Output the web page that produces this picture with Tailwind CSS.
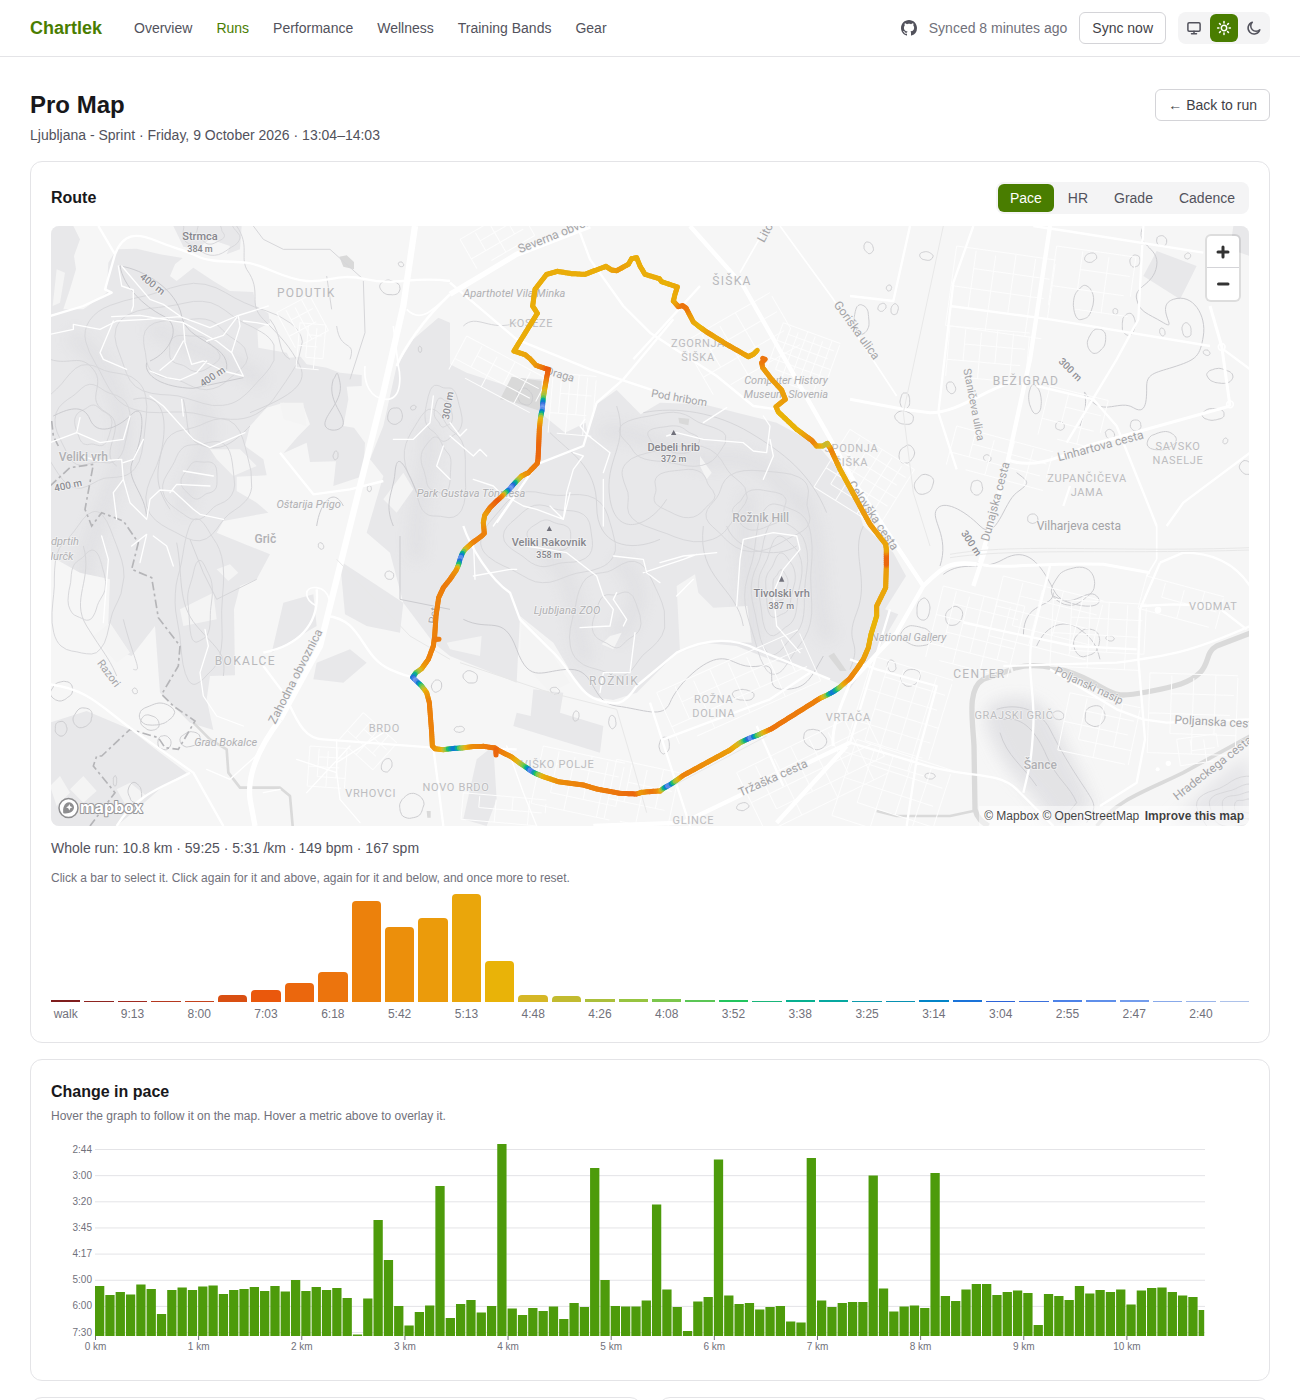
<!DOCTYPE html>
<html lang="en">
<head>
    <meta charset="UTF-8">
    <meta name="viewport" content="width=device-width, initial-scale=1.0">
    <title>Pro Map - Chartlek</title>
    <script src="https://cdn.jsdelivr.net/npm/@tailwindcss/browser@4"></script>
</head>
<body class="bg-white text-zinc-900 font-['Liberation_Sans',Arial,sans-serif]">

    <!-- Top bar -->
    <header class="border-b border-zinc-200">
        <div class="flex h-14 items-center justify-between px-[30px]">
            <div class="flex items-center gap-8">
                <a href="#" class="text-lg font-bold text-lime-700">Chartlek</a>
                <nav class="flex gap-6 text-sm text-zinc-600">
                    <a href="#">Overview</a>
                    <a href="#" class="text-lime-700">Runs</a>
                    <a href="#">Performance</a>
                    <a href="#">Wellness</a>
                    <a href="#">Training Bands</a>
                    <a href="#">Gear</a>
                </nav>
            </div>
            <div class="flex items-center gap-3 text-sm">
                <a href="#" aria-label="GitHub" class="text-zinc-600">
                    <svg class="size-4" viewBox="0 0 16 16" fill="currentColor"><path d="M8 0C3.58 0 0 3.58 0 8c0 3.54 2.29 6.53 5.47 7.59.4.07.55-.17.55-.38 0-.19-.01-.82-.01-1.49-2.01.37-2.53-.49-2.69-.94-.09-.23-.48-.94-.82-1.13-.28-.15-.68-.52-.01-.53.63-.01 1.08.58 1.23.82.72 1.21 1.87.87 2.33.66.07-.52.28-.87.51-1.07-1.78-.2-3.64-.89-3.64-3.95 0-.87.31-1.59.82-2.15-.08-.2-.36-1.02.08-2.12 0 0 .67-.21 2.2.82.64-.18 1.32-.27 2-.27s1.36.09 2 .27c1.53-1.04 2.2-.82 2.2-.82.44 1.1.16 1.92.08 2.12.51.56.82 1.27.82 2.15 0 3.07-1.87 3.75-3.65 3.95.29.25.54.73.54 1.48 0 1.07-.01 1.93-.01 2.2 0 .21.15.46.55.38A8.01 8.01 0 0 0 16 8c0-4.42-3.58-8-8-8z"/></svg>
                </a>
                <span class="text-zinc-500">Synced 8 minutes ago</span>
                <button type="button" class="h-8 rounded-md border border-zinc-300 px-3 text-zinc-700">Sync now</button>
                <div class="flex gap-0.5 rounded-lg bg-zinc-100 p-0.5 text-zinc-600">
                    <button type="button" aria-label="System theme" class="flex size-7 items-center justify-center rounded-md">
                        <svg class="size-4" viewBox="0 0 16 16" fill="none" stroke="currentColor" stroke-width="1.5" stroke-linecap="round" stroke-linejoin="round"><rect x="1.9" y="2.7" width="12.2" height="8.6" rx="1.2"/><path d="M8 11.3v2.4M5.5 13.7h5"/></svg>
                    </button>
                    <button type="button" aria-label="Light theme" class="flex size-7 items-center justify-center rounded-md bg-lime-700 text-white">
                        <svg class="size-4" viewBox="0 0 16 16" fill="none" stroke="currentColor" stroke-width="1.5" stroke-linecap="round"><circle cx="8" cy="8" r="2.7"/><path d="M8 1.6v1.3M8 13.1v1.3M1.6 8h1.3M13.1 8h1.3M3.5 3.5l.9.9M11.6 11.6l.9.9M3.5 12.5l.9-.9M11.6 4.4l.9-.9"/></svg>
                    </button>
                    <button type="button" aria-label="Dark theme" class="flex size-7 items-center justify-center rounded-md">
                        <svg class="size-4" viewBox="0 0 16 16" fill="none" stroke="currentColor" stroke-width="1.5" stroke-linecap="round" stroke-linejoin="round"><path d="M13.800 9.700A6 6 0 1 1 6.300 2.200a5.200 5.200 0 0 0 7.500 7.500z"/></svg>
                    </button>
                </div>
            </div>
        </div>
    </header>

    <main class="flex flex-col gap-4 px-[30px] py-8">
        <div class="flex items-start justify-between">
            <div>
                <h1 class="text-2xl font-bold">Pro Map</h1>
                <p class="mt-1 text-sm text-zinc-600">Ljubljana - Sprint · Friday, 9 October 2026 · 13:04–14:03</p>
            </div>
            <a href="#" class="flex h-8 items-center rounded-md border border-zinc-300 px-3 text-sm text-zinc-700">← Back to run</a>
        </div>

        <!-- Route card -->
        <section class="rounded-xl border border-zinc-200 p-5">
            <div class="mb-3 flex items-center justify-between">
                <h2 class="text-base font-bold">Route</h2>
                <div class="flex gap-0.5 rounded-lg bg-zinc-100 p-0.5 text-sm text-zinc-600">
                    <button type="button" class="h-7 rounded-md bg-lime-700 px-3 text-white">Pace</button>
                    <button type="button" class="h-7 rounded-md px-3">HR</button>
                    <button type="button" class="h-7 rounded-md px-3">Grade</button>
                    <button type="button" class="h-7 rounded-md px-3">Cadence</button>
                </div>
            </div>

            <div class="relative h-[600px] overflow-hidden rounded-lg bg-[#f6f6f6]">
                <svg class="size-full" viewBox="3 0 3594 1800" preserveAspectRatio="xMidYMid slice" role="img" aria-label="Map of the run">
                    <defs>
                        <filter id="soft"><feGaussianBlur stdDeviation="22"/></filter>
                        <clipPath id="woods-clip"><use href="#woods"/></clipPath>
                    </defs>

                    <!-- Woodland -->
                    <path id="woods" fill="#e8e8ea" d="M0 0H70L90 40 72 90 78 130 60 190 40 250 100 250 170 200 175 110 200 70 260 68 330 85 398 96 375 115 360 150 380 165 430 125 490 165 540 195 610 198 618 240 655 262 660 290 622 310 625 365 710 380 718 395 752 392 770 415 830 425 870 440 935 447 935 480 890 482 895 520 880 600 912 605 945 650 940 750 850 780 858 706 780 708 770 650 700 682 745 630 780 595 762 545 700 530 650 545 600 600 585 660 640 700 650 748 560 752 560 795 620 830 655 860 520 885 500 920 660 985 620 1060 570 1080 552 1150 555 1348 480 1350 470 1420 490 1512 420 1490 330 1400 315 1200 245 1290 172 1262 180 1060 90 1040 0 990ZM370 0H575L570 70 530 85 540 60 480 40 440 70 400 62ZM1165 275 1200 290V415L1250 440 1380 482 1400 455 1475 460 1480 568 1545 620 1607 590 1612 620 1640 535 1700 492 1772 565 1830 530 1960 535 2180 590 2300 655 2400 770 2440 900 2530 980 2568 1050 2505 1150 2545 1165 2490 1260 2430 1345 2400 1388 2280 1335 2160 1300 2060 1260 1960 1250 1885 1275 1840 1320 1760 1400 1690 1422 1620 1412 1570 1350 1510 1250 1410 1170 1400 1370 1300 1330 1200 1290 1150 1250 1060 1130 1020 980 950 920 1000 750 960 700 1000 600 1040 420 1090 340ZM870 1005 1060 1130 1050 1220 950 1200 885 1165ZM700 1130 790 1105 800 1200 665 1280ZM800 1310 900 1270 950 1310 880 1370 790 1360ZM0 1490 110 1455 240 1510 330 1580 410 1640 340 1680 260 1750 200 1800H0ZM1450 1390 1540 1400 1530 1460 1660 1500 1650 1580 1390 1500 1400 1460 1442 1470ZM1280 1600 1330 1560 1340 1720 1310 1800 1240 1780ZM3280 150 3320 75 3440 120 3390 220ZM3550 0H3600V90L3540 70Z"/>
                    <g clip-path="url(#woods-clip)" fill="none" stroke="#d4d4d8" filter="url(#soft)" opacity=".4">
                        <path stroke-width="40" d="M60 330C180 400 240 560 210 700S80 980 110 1100M300 300C420 380 520 380 640 470M440 520C520 640 420 700 400 860M1130 600C1160 700 1090 800 1100 1000M1650 620C1800 600 1880 720 2000 700S2200 760 2260 860M2100 800C2060 950 2120 1100 2100 1260M2250 800C2330 950 2280 1150 2340 1240M1480 980C1600 1040 1560 1200 1610 1310M1700 1000C1800 1080 1760 1160 1700 1240"/>
                    </g>

                    <!-- Castle hill -->
                    <path fill="#e1e1e4" filter="url(#soft)" opacity=".9" d="M2830 1430C2900 1400 2980 1410 3020 1500S3090 1630 3130 1740L3040 1800H3000C2980 1720 2900 1680 2850 1590S2790 1450 2830 1430Z"/>
                    <path fill="none" stroke="#cfcfd3" stroke-width="3" d="M2840 1450C2900 1430 2970 1450 3000 1510S3060 1620 3100 1680 3140 1740 3110 1790M2860 1480C2920 1470 2960 1520 2990 1590S3060 1680 3080 1730L3030 1790M2850 1520C2870 1590 2920 1620 2960 1680"/>
                    <path fill="#e6e6e9" filter="url(#soft)" d="M3360 1800C3440 1720 3500 1640 3600 1590V1800Z"/>

                    <!-- Clearings -->
                    <g fill="#f4f4f4">
                        <path d="M1880 1080 1935 1045 1945 1100 1990 1145 2092 1140 2105 1250 2000 1245 1890 1280ZM390 1150 490 1100 500 1180 400 1200ZM500 1030 540 1015 565 1040 535 1065ZM1190 1250 1295 1230 1290 1290 1200 1270ZM1680 1230 1715 1220 1690 1270 1655 1255ZM1950 690 1985 740 1970 760 1950 720ZM1415 1180 1410 1300 1500 1400 1560 1370 1480 1240ZM480 670 570 670 620 720 550 750 500 700ZM690 530 760 530 770 600 700 580ZM1060 740 1090 790 1040 860 1000 820Z"/>
                        <path d="M60 1690 100 1650 140 1695 100 1730ZM0 1680 30 1650 60 1700 20 1740ZM200 1690 240 1670 290 1710 240 1760ZM130 1230 180 1190 240 1280 200 1310ZM20 130 45 140 30 230 8 240Z"/>
                    </g>
                    <path fill="#d9d9d9" d="M868 92 890 88 912 108 912 130 880 122ZM1350 520 1385 452 1475 465 1470 555 1380 525ZM1885 575 1918 578 1915 598 1888 592ZM2335 1290 2352 1280 2390 1335 2370 1335ZM1130 1755H1142V1775H1132Z"/>

                    <!-- River -->
                    <g fill="none" stroke="#dadada" stroke-width="16" stroke-linejoin="round">
                        <path d="M2888 1328C2960 1305 3060 1330 3130 1370S3200 1415 3290 1398 3420 1370 3450 1340 3465 1280 3500 1260L3600 1222M2882 1332 2800 1360C2750 1390 2768 1480 2772 1560L2775 1750C2782 1780 2800 1790 2815 1800"/>
                        <path stroke-width="11" d="M3140 1800C3200 1720 3300 1690 3400 1640L3600 1530"/>
                        <path stroke-width="8" d="M430 1490 480 1540 530 1570 535 1640 570 1685 690 1685 720 1710 728 1800M2480 1755 2540 1770 2700 1770 2770 1755"/>
                    </g>

                    <g id="contours" fill="none" stroke="#d8d8db" stroke-width="3"></g>
                    <g fill="none" stroke="#d6d6d9" stroke-width="3">
                        <path d="M0 400C60 420 90 380 130 430S100 520 170 560 140 680 200 720M250 520C330 500 350 560 340 640S300 760 360 850M400 520C420 600 400 640 460 660S560 640 600 600M590 130C640 200 590 230 640 280S720 360 750 420 700 520 600 560M560 0C600 60 570 90 590 130M610 0 640 40 700 70 840 70 940 160M660 280C700 330 680 380 720 400M830 150 845 250M940 165 945 320 900 460M860 300C870 380 920 340 900 400M380 950C400 1050 380 1130 440 1200S530 1280 520 1350M620 1060 500 1120 460 1040 420 940M100 960C130 1060 60 1120 110 1200S180 1300 200 1350M220 1180C250 1300 280 1340 250 1330M1240 300C1280 260 1320 320 1400 290M1780 560C1880 540 2000 560 2100 620S2280 740 2330 860M1700 540C1740 660 1660 700 1680 820S1800 900 1850 820M1500 620C1560 680 1640 720 1640 840S1740 980 1830 940M2030 900C2060 980 2180 1000 2240 960M1960 900C1940 1060 2060 1080 2080 1200M2440 900C2400 980 2460 1060 2420 1160S2440 1240 2400 1330"/>
                    </g>
                    <g fill="none" stroke="#cbcbcf" stroke-width="3">
                        <path d="M300 405C360 380 400 300 340 270S220 180 210 120C280 130 380 190 395 270S540 350 530 430M290 410C280 450 340 485 430 487L580 455M10 570C50 550 100 530 120 580S200 610 245 565 280 640 250 700 290 800 290 880M850 460C830 520 880 560 880 590S820 620 825 590 880 520 870 470 860 450 850 460M1100 800C1060 700 1040 680 1035 740S1000 830 1030 900M800 900C810 830 850 780 880 840M1050 930V1120L1200 1150M1320 1100"/>
                        <path d="M1240 1180C1320 1220 1360 1160 1400 1270S1480 1330 1560 1330 1620 1430 1700 1440 1840 1480 1860 1430 1950 1310 2000 1300 2060 1330 2130 1320 2130 1390 2200 1390 2280 1360 2320 1290 2390 1290M0 1310 130 1400C200 1420 250 1420 330 1500S500 1540 560 1620 700 1690 820 1700M1200 1455C1300 1480 1280 1560 1360 1520S1410 1590 1460 1590"/>
                        <path d="M2670 1020C2700 930 2640 880 2660 850S2740 850 2790 900 2860 830 2900 800 2940 770 2900 740M2680 1045C2740 1000 2790 1040 2860 1000S2970 1010 3010 1090 3110 1080 3140 1110 3110 1160 3010 1110M2920 1230C2920 1120 3010 1150 3010 1100M2960 1260C2990 1190 3050 1180 3090 1210S3140 1260 3150 1300M3280 0C3250 60 3330 60 3320 120S3250 180 3260 220 3290 260 3340 290 3310 240 3370 220 3470 270 3460 330 3440 400 3380 420 3290 440 3290 480 3290 570 3250 545 3160 570 3120 520 3130 510 3090 600 3100 630M3010 370C3060 420 3150 400 3200 440S3150 460 3090 450M2765 500C2740 420 2800 390 2830 410S2880 370 2920 400 2870 520 2765 500M2880 730C2920 710 2950 780 2940 810S2880 850 2870 820M3090 780C3100 850 3050 900 3140 900S3170 820 3210 780 3210 720 3160 720 3080 680 3030 720M2840 1370C2860 1400 2950 1400 3000 1480S3060 1520 3070 1560 3110 1600 3150 1640 3210 1620 3200 1680M2900 1240C2830 1200 2850 1290 2860 1300M2670 1470C2690 1380 2730 1380 2710 1340S2730 1300 2740 1280M2670 1470C2760 1480 2720 1540 2740 1560S2730 1650 2710 1650 2690 1560 2630 1610M3310 180C3340 210 3350 160 3370 140S3400 200 3460 180 3490 240 3530 180"/>
                    </g>
                    <g id="blobs" fill="none" stroke="#cdcdd0" stroke-width="3"></g>

                    <!-- Municipal border -->
                    <path fill="none" stroke="#b5b5b8" stroke-width="5" stroke-dasharray="26 10 8 10" d="M0 780 60 725 130 715 105 850 125 900 155 860 220 885 265 950 245 1030 305 1055 325 1175 390 1260 385 1320 335 1405 370 1440 435 1485 385 1570 345 1565 325 1535 240 1510 155 1590 140 1590 130 1620 195 1700 120 1800M5 585 10 630 25 660"/>

                    <!-- Minor streets and tracks -->
                    <g id="streets" fill="none" stroke="#fdfdfd" stroke-width="3"></g>
                    <g fill="none" stroke="#fff" stroke-width="4" stroke-linejoin="round" stroke-linecap="round">
                        <path d="M0 325 70 310 70 295 150 310 200 285 290 280 390 272 440 290 480 305 560 270 640 245 655 240M185 272 270 268 400 290 405 350 425 415 460 405 520 435 580 450 545 380 570 300 565 270M300 435 350 455 390 462 440 440 470 405M400 345 370 400 330 433M205 120 215 180 250 192 250 240 245 255M215 120 300 220 340 235 390 270M470 345 520 328 560 275M580 285 620 290 655 297M545 380 500 345 400 290"/>
                        <path d="M0 650 80 620 90 575M80 620 150 650 220 640 240 570M90 690 150 705 215 700 220 760 190 800 200 880M220 710 250 700 280 640M220 760 240 830 290 880 300 820 330 792 370 795 430 850 450 865 520 880M360 800 380 775 480 780M400 735 490 750M160 1190 175 1000 155 930M245 960 290 925 270 1010M310 930 350 960 370 1020M465 1210 475 1260 450 1340 460 1410 500 1470 580 1500M300 510 340 540 430 640 480 665 585 620M190 285 150 380 160 400 230 430M395 520 400 570"/>
                        <path d="M1200 590 1230 630 1250 610M1200 630 1270 690 1290 670 1310 690M1330 900 1400 800 1430 760M1270 760 1330 780 1350 800 1420 840 1460 850 1540 880 1560 800M1540 880 1550 800 1570 730 1600 690 1570 680M1660 740 1680 680 1610 625 1590 600 1605 580M1660 760 1660 900M1850 630 1880 620 1960 640 2080 650 2110 675 2150 680 2160 600 2140 570M1960 590 2030 545M2140 760 2170 690 2160 640M1690 990 1780 1000 1790 1040 1830 1070M1830 1010 1900 990 2000 980M1720 1200 1730 1180 1690 1120 1700 1100M2060 1140 2070 1000 2080 940 2170 920 2240 930 2250 970 2200 1030 2170 1100 2180 1200 2250 1280M1430 960 1550 980 1640 1050 1660 1110 1690 1150 1680 1200 1590 1205M1500 840 1540 880M1650 1400 1660 1340 1740 1340 1755 1220M1270 1050 1380 1030 1400 1030M1150 510 1140 590 1090 640 1030 640M1180 660 1160 720 1200 760M1270 940 1275 1060M1780 1040 1900 1000 1940 985M1880 1110 1930 1060"/>
                        <path d="M470 1630 540 1660 640 1570M690 1690 640 1700M740 1600 860 1640 870 1720 930 1790M860 1540V1650M1000 1520 860 1610M1370 1560 1420 1700 1460 1800M770 1700 900 1560"/>
                    </g>

                    <!-- Secondary roads -->
                    <g fill="none" stroke="#fff" stroke-width="7" stroke-linejoin="round">
                        <path d="M145 0 195 85 165 190 185 200 100 240 0 270M195 85C220 20 260 20 320 45S400 70 440 90 540 105 590 110 700 160 770 165 860 140 950 160 1080 150 1200 165M700 1400C740 1480 760 1540 820 1540L1150 1565 1400 1570M1150 1565 1180 1800M640 1280C740 1260 810 1200 800 1090M830 1170C940 1180 930 1290 1020 1330S1090 1340 1100 1360M0 1375C120 1390 160 1450 260 1520L430 1640 520 1800M200 1800C260 1700 350 1680 420 1640M640 1320 700 1400 740 1480M1000 765 900 790 790 805 690 680"/>
                        <path d="M1240 900C1260 960 1320 1060 1380 1100L1410 1180 1500 1270C1560 1320 1580 1400 1640 1420S1720 1440 1760 1380L1880 1280C1980 1230 2060 1240 2120 1270L2340 1360M1340 890 1460 715 1600 660 1640 530M1200 170 1400 340 1620 430 1830 500M1590 20 1620 100 1720 240 1800 320 2000 450 2110 540 2180 550M1750 400 1950 180M1640 530 1720 460 1870 280"/>
                        <path d="M2770 0 2710 170 2665 560 2720 730M2950 0 3050 15 3460 80M2700 240 3000 280 3480 360M3280 0 3265 280 3200 400 3050 650M2960 480 3130 520 3200 600 3320 900M3600 430 3520 370M3600 680 3400 830 3350 900M3040 840 3060 780M2580 0 2530 225 2400 210M3330 1010 3270 1150 3265 1300 3285 1540 3260 1670 3150 1740M2740 1190 2880 1220 3070 1260 3260 1270M3000 1020 2945 1240C2930 1340 2955 1400 2950 1500S2940 1620 2920 1700M2400 1300 2480 1330 2660 1380 2600 1600 2570 1800M2400 1550 2600 1610C2740 1660 2840 1630 2900 1690L3010 1800M2860 1320 3200 1310C3350 1290 3420 1280 3600 1200M3270 1140 3370 1135 3500 1140 3590 1210M3330 1010 3400 980C3500 980 3560 1020 3600 1080M3000 1330 3200 1450 3280 1480 3350 1490 3600 1480M2400 1550 2520 1150M1840 1540 2160 1420 2280 1340M2120 1500 2200 1680M1800 1430 1920 1800"/>
                    </g>

                    <!-- Main roads -->
                    <g fill="none" stroke="#fff" stroke-linejoin="round">
                        <path stroke-width="19" d="M1095 0 1060 240 1000 500 900 900 810 1260 690 1480"/>
                        <path stroke-width="16" d="M690 1480C630 1560 590 1640 600 1720L615 1800M1200 205 1400 85 1620 0"/>
                        <path stroke-width="8" d="M1200 205C1120 280 1060 370 1040 420"/>
                        <path stroke-width="13" d="M1920 0 2080 180 2330 620 2420 780 2540 960 2620 1080M1630 1800 1900 1790 2400 1550M2180 1790 2390 1560M2620 1080C2680 1020 2700 1005 2780 1015M2810 960 2770 1080M2790 1010 2870 720 2940 400 3000 0M2620 1080 2540 1220 2400 1370"/>
                        <path stroke-width="9" d="M2400 520 2560 550 2640 560C2720 560 2790 500 2880 470M2780 1015C2880 1030 2960 1010 3160 1015L3300 1040M2870 700C2940 730 3020 700 3110 660L3540 540M3480 240 3515 360 3540 540M2350 1560C2340 1500 2390 1400 2400 1370"/>
                        <path stroke-width="5" d="M2190 0 2350 220 2540 510M2070 140 2150 0M945 420C940 470 960 520 1010 520S1050 440 1045 420L1030 300M800 1140C760 1120 760 1080 800 1085S850 1140 830 1180M1070 250C1110 290 1140 260 1200 205M3320 900V1000M3320 1000 3290 1050"/>
                        <circle cx="3515" cy="363" r="10" stroke-width="5"/><circle cx="3540" cy="535" r="10" stroke-width="5"/>
                    </g>
                    <g fill="#fff"><circle cx="3324" cy="1152" r="10"/><circle cx="3355" cy="1612" r="8"/><circle cx="3323" cy="1630" r="6"/></g>
                    <!-- Railway -->
                    <g fill="none" stroke="#e8e8e8" stroke-width="3"><path d="M2680 0 2560 560 2590 800 2640 960M2700 985C2900 950 3200 980 3600 965M2700 995C2900 965 3200 985 3600 972M1230 1310 1500 1400 1700 1450 1750 1620 1790 1760M860 1000 1080 1230 1200 1300M1830 1700 2150 1530"/></g>

                    <g id="labels" class="font-[Roboto,sans-serif]" paint-order="stroke" stroke-linejoin="round"></g>
                    <g fill="#71717b"><path d="M1871 612 1879 627H1863ZM1498 900 1506 915H1490ZM2195 1050 2203 1067H2187Z"/></g>
                    <g id="route" fill="none" stroke-width="15" stroke-linecap="round"></g>
                </svg>

                <a href="#" aria-label="Mapbox" class="absolute bottom-1.5 left-1.5">
                    <svg class="h-6 w-[92px]" viewBox="0 0 92 24">
                        <circle cx="11.500" cy="12" r="9.500" fill="#fff" stroke="#8e8e90" stroke-width="1.500"/>
                        <path fill="#8e8e90" d="M6.300 17.300C5.400 12 7.300 6.600 12.200 6.300A5.200 5.200 0 0 1 17 11.600C16.800 16.100 11.500 18.200 6.300 17.300Z"/>
                        <path fill="#fff" d="M12.300 8l1 2.200 2.200 1-2.200 1-1 2.200-1-2.200-2.200-1 2.200-1z"/>
                        <text x="23" y="17" font-size="16" fill="#fff" stroke="#98989b" stroke-width="2" paint-order="stroke" stroke-linejoin="round" class="font-[Inter,sans-serif] font-bold">mapbox</text>
                    </svg>
                </a>

                <div class="absolute top-2.5 right-2.5 flex flex-col rounded-sm bg-white ring-2 ring-black/10">
                    <button type="button" aria-label="Zoom in" class="flex size-8 items-center justify-center border-b border-zinc-300">
                        <svg class="size-4" viewBox="0 0 16 16" stroke="#333" stroke-width="3" stroke-linecap="round"><path d="M8 3v10M3 8h10"/></svg>
                    </button>
                    <button type="button" aria-label="Zoom out" class="flex size-8 items-center justify-center">
                        <svg class="size-4" viewBox="0 0 16 16" stroke="#333" stroke-width="3" stroke-linecap="round"><path d="M3.500 8h9.500"/></svg>
                    </button>
                </div>

                <div class="absolute right-0 bottom-0 bg-white/50 px-[5px] text-xs/5 text-black/75">
                    <a href="#">© Mapbox</a>
                    <a href="#">© OpenStreetMap</a>
                    <a href="#" class="ml-0.5 font-bold">Improve this map</a>
                </div>
            </div>

            <p class="mt-3 text-sm text-zinc-600">Whole run: 10.8 km · 59:25 · 5:31 /km · 149 bpm · 167 spm</p>
            <p class="mt-3 text-xs text-zinc-500">Click a bar to select it. Click again for it and above, again for it and below, and once more to reset.</p>

            <div id="histogram" class="mt-2 flex h-[108px] items-end gap-1"></div>
            <div id="histogram-labels" class="mt-1 flex h-4 gap-1 text-xs text-zinc-500"></div>
        </section>

        <!-- Pace over distance -->
        <section class="rounded-xl border border-zinc-200 p-5">
            <h2 class="text-base font-bold">Change in pace</h2>
            <p class="mt-1 text-xs text-zinc-500">Hover the graph to follow it on the map. Hover a metric above to overlay it.</p>
            <svg id="pace-chart" class="mt-2 block w-full" viewBox="0 0 1198 228" role="img" aria-label="Pace by distance"></svg>
        </section>

        <div class="grid grid-cols-2 gap-4">
            <section class="h-40 rounded-xl border border-zinc-200 p-5"></section>
            <section class="h-40 rounded-xl border border-zinc-200 p-5"></section>
        </div>
    </main>

    <script>
        const NS = 'http://www.w3.org/2000/svg';

        function draw(parent, tag, attrs, text) {
            const node = document.createElementNS(NS, tag);
            Object.entries(attrs).forEach(([key, value]) => node.setAttribute(key, value));
            if (text) node.textContent = text;
            parent.appendChild(node);
        }

        // --- Pace bands: label, share of the tallest bar (%), colour ---
        const bands = [
            ['walk', 1.9, '#7f1d1d'], ['', 1, '#8e2420'], ['9:13', 1, '#9f2a20'], ['', 1, '#b5381f'],
            ['8:00', 1, '#c4421c'], ['', 6.5, '#d94f12'], ['7:03', 11.1, '#ea580c'], ['', 17.6, '#eb670d'],
            ['6:18', 27.8, '#ec740d'], ['', 93.5, '#ec810c'], ['5:42', 69.4, '#ec8f0b'], ['', 77.8, '#eb9b0b'],
            ['5:13', 100, '#eaa60b'], ['', 38, '#e9b308'], ['4:48', 6.5, '#d6b726'], ['', 5.6, '#c2bb30'],
            ['4:26', 2.8, '#abbf3b'], ['', 2.8, '#97c440'], ['4:08', 2.8, '#7cc64c'], ['', 1.9, '#5bc655'],
            ['3:52', 1.9, '#22c55e'], ['', 1, '#19b67a'], ['3:38', 1.9, '#06b090'], ['', 1.9, '#06a8a0'],
            ['3:25', 1, '#0f9bac'], ['', 1, '#0891b2'], ['3:14', 1.9, '#0284c7'], ['', 1.9, '#1a73d9'],
            ['3:04', 1, '#2c63d8'], ['', 1, '#3b70dc'], ['2:55', 1.9, '#4c82e8'], ['', 1.9, '#5f8fea'],
            ['2:47', 1.9, '#739cec'], ['', 1, '#88a9ea'], ['2:40', 1, '#9ab5ea'], ['', 1, '#adc2ea']
        ];

        const histogram = document.getElementById('histogram');
        const histogramLabels = document.getElementById('histogram-labels');
        bands.forEach(([label, share, color], i) => {
            const bar = document.createElement('button');
            bar.type = 'button';
            bar.className = share < 3 ? 'min-w-0 flex-1' : 'min-w-0 flex-1 rounded-t-sm';
            bar.style.height = share + '%';
            bar.style.backgroundColor = color;
            bar.setAttribute('aria-label', label ? 'Pace ' + label : 'Pace band ' + (i + 1));
            histogram.appendChild(bar);

            const tick = document.createElement('span');
            tick.className = 'flex min-w-0 flex-1 justify-center whitespace-nowrap';
            tick.textContent = label;
            histogramLabels.appendChild(tick);
        });

        // --- Pace chart ---
        const chart = document.getElementById('pace-chart');
        const heights = [50, 41, 44, 41.5, 51.5, 47, 22, 46, 48.5, 46, 49.5, 50.5, 42, 46, 47, 49, 45, 50, 44.5, 56, 45, 49, 46, 48, 38, 1.5, 37.5, 116, 76, 30,
            10.5, 24, 30.5, 150, 18, 32, 36, 23.5, 30, 192, 27.5, 21, 28, 25, 29.5, 17, 33, 29, 168, 56, 30, 29.5, 29.5, 35.5, 131.5, 46.5, 29, 5, 34.5, 39,
            176.5, 40.5, 32, 33, 26.5, 29, 30, 14.5, 13.5, 178, 35.5, 29, 33, 34, 34, 160.5, 47.5, 24.5, 29.5, 30.5, 28, 163, 40, 35, 46.5, 52, 52, 41, 44, 45.5,
            43, 11, 42, 40, 36, 50, 42.5, 46, 44, 46.5, 31.5, 45.5, 48, 48.5, 44, 40.5, 39, 26];
        ['2:44', '3:00', '3:20', '3:45', '4:17', '5:00', '6:00', '7:30'].forEach((label, i) => {
            const y = 17.5 + i * 26.15;
            draw(chart, 'line', { x1: 44, x2: 1154, y1: y, y2: y, stroke: '#e4e4e7' });
            draw(chart, 'text', { x: 41, y: y + 3, 'font-size': 10, 'text-anchor': 'end', fill: '#71717b' }, label);
        });
        heights.forEach((h, i) => {
            draw(chart, 'rect', { x: 44 + i * 10.314, y: 204 - h, width: i === heights.length - 1 ? 5.6 : 9.3, height: h, fill: '#4d9b0b' });
        });
        for (let km = 0; km <= 10; km++) {
            const x = 44.5 + km * 103.14;
            draw(chart, 'line', { x1: x, x2: x, y1: 204, y2: 208, stroke: '#71717b' });
            draw(chart, 'text', { x, y: 218, 'font-size': 10, 'text-anchor': 'middle', fill: '#71717b' }, km + ' km');
        }

        // --- Map: contour rings round each hill [cx, cy, rx, ry, rings] ---
        const contours = document.getElementById('contours');
        function ring(parent, cx, cy, rx, ry, seed, wobble) {
            const pts = [];
            for (let a = 0; a < 24; a++) {
                const t = a / 24 * Math.PI * 2;
                const k = 1 + 0.12 * Math.sin(2 * t + seed) + wobble * Math.sin(5 * t + seed * 2.3);
                pts.push([cx + Math.cos(t) * rx * k, cy + Math.sin(t) * ry * k]);
            }
            let d = '';
            pts.forEach((p, i) => {
                const n = pts[(i + 1) % 24];
                const mid = [Math.round((p[0] + n[0]) / 2), Math.round((p[1] + n[1]) / 2)];
                d += i === 0 ? `M${mid}` : `Q${Math.round(p[0])},${Math.round(p[1])} ${mid}`;
            });
            draw(parent, 'path', { d: d + 'Z' });
        }
        [[430, 380, 290, 220, 4], [130, 600, 150, 200, 3], [450, 760, 150, 180, 3], [110, 1080, 110, 200, 2], [450, 1130, 80, 220, 2], [480, 20, 90, 60, 2],
            [1870, 640, 150, 80, 2], [1500, 930, 180, 150, 3], [1700, 1180, 130, 180, 2], [2190, 1080, 110, 230, 5], [2130, 850, 170, 110, 2], [1900, 800, 200, 130, 2],
            [1160, 720, 90, 160, 2], [1180, 560, 50, 90, 2], [3590, 1740, 140, 90, 4]].forEach(([cx, cy, rx, ry, n], h) => {
            for (let i = 1; i <= n; i++) ring(contours, cx, cy, rx * i / n, ry * i / n, h + i * 0.3, 0.08);
        });

        const blobs = document.getElementById('blobs');
        [[2456, 65, 14, 17], [2629, 90, 18, 14], [2517, 186, 7, 10], [2496, 244, 12, 12], [2534, 250, 12, 15], [2435, 280, 25, 40], [2703, 485, 14, 17], [2563, 575, 26, 22],
            [2565, 525, 13, 28], [2570, 685, 22, 28], [2622, 775, 30, 28], [2780, 785, 20, 20], [2812, 697, 12, 10], [2955, 520, 18, 45], [3030, 600, 12, 14], [3100, 230, 28, 55],
            [3140, 345, 28, 35], [3236, 295, 22, 30], [3410, 312, 15, 20], [3337, 318, 8, 12], [3335, 45, 14, 18], [3255, 105, 14, 20], [3122, 95, 18, 14], [3413, 90, 10, 8],
            [3196, 256, 8, 8], [3470, 380, 10, 8], [3510, 450, 36, 24], [3490, 565, 30, 20], [3335, 645, 42, 28], [3526, 645, 8, 8], [3257, 598, 18, 15], [3180, 625, 14, 14],
            [3590, 725, 20, 22], [2948, 878, 14, 16], [2712, 1170, 24, 30], [2582, 1355, 30, 24], [3135, 1470, 34, 28], [3025, 1468, 18, 12], [3180, 1237, 12, 8], [2640, 1650, 14, 10],
            [3110, 1250, 36, 45], [3070, 1080, 65, 55], [2620, 1150, 22, 30], [2525, 1320, 14, 16], [2295, 1540, 34, 30], [2080, 1407, 30, 18], [1843, 1558, 14, 28], [2078, 1742, 18, 12],
            [1578, 1470, 10, 14], [1687, 1488, 12, 18], [1515, 1394, 14, 10], [1261, 1353, 20, 20], [1228, 1510, 14, 10], [320, 1465, 50, 34], [98, 1475, 30, 28], [33, 1508, 20, 20],
            [255, 1395, 8, 8], [300, 1490, 26, 24], [343, 1550, 18, 24], [420, 1540, 28, 24], [35, 1395, 34, 28], [195, 1665, 6, 14], [255, 1700, 22, 28], [813, 960, 8, 10],
            [1018, 1048, 12, 14], [1160, 1380, 14, 20], [1010, 1618, 16, 20], [1085, 1740, 40, 34], [1110, 370, 6, 8], [1053, 115, 8, 7], [1020, 185, 28, 24], [1035, 570, 20, 28],
            [1090, 545, 8, 7], [857, 688, 8, 12], [958, 788, 7, 8], [1425, 512, 24, 24], [2600, 1230, 44, 32]].forEach(([cx, cy, rx, ry], i) => ring(blobs, cx, cy, rx, ry, i, 0.03));

        // --- Map: street grids [x, y, angle, columns, rows, column gap, row gap] ---
        const streets = document.getElementById('streets');
        [[680, 260, -28, 4, 3, 28, 40], [750, 290, 5, 3, 4, 26, 34], [1230, 40, -30, 4, 3, 50, 34], [1250, 330, 28, 5, 3, 55, 38], [1510, 440, 5, 5, 3, 26, 60],
            [1900, 350, -30, 5, 3, 60, 60], [2200, 290, 20, 7, 6, 26, 28], [2400, 610, 32, 6, 6, 38, 34], [2720, 60, 8, 5, 4, 60, 60], [3020, 60, 8, 3, 3, 80, 60], [2700, 300, 5, 5, 3, 48, 50],
            [2720, 600, 15, 5, 3, 60, 40], [3000, 480, 14, 3, 3, 60, 50], [2680, 1080, 14, 6, 5, 42, 44], [2860, 1050, 14, 5, 4, 62, 46], [2470, 1290, 17, 5, 6, 50, 50], [2420, 1540, 18, 5, 4, 60, 60],
            [3010, 1120, 3, 5, 4, 56, 50], [3060, 1400, 12, 4, 4, 54, 44], [3300, 1340, 2, 4, 4, 66, 60], [1820, 1400, -24, 8, 3, 58, 56], [2060, 1640, -26, 7, 4, 60, 50], [1480, 1560, 12, 5, 4, 50, 44],
            [1700, 1600, 12, 4, 3, 48, 60], [780, 1560, 4, 4, 4, 28, 30], [940, 1460, 42, 4, 3, 34, 36], [1240, 1700, 5, 5, 2, 50, 40], [3290, 1050, 15, 4, 2, 60, 50], [3380, 1540, -8, 3, 2, 40, 40]].forEach(([x, y, angle, cols, rows, dx, dy]) => {
            let d = '';
            for (let c = 0; c <= cols; c++) d += `M${c * dx} ${c % 3 * 6}V${rows * dy - c % 2 * dy}`;
            for (let r = 0; r <= rows; r++) d += `M${r % 2 * dx} ${r * dy}H${cols * dx - r % 3 * 10}`;
            draw(streets, 'path', { d, transform: `translate(${x} ${y}) rotate(${angle})` });
        });

        // --- Map labels: text, x, y, kind, angle ---
        const kinds = {
            area: { 'font-size': 36, fill: '#b9b9bc', 'letter-spacing': 4, 'text-anchor': 'middle' },
            district: { 'font-size': 33, fill: '#bdbdc0', 'letter-spacing': 2, 'text-anchor': 'middle' },
            village: { 'font-size': 36, fill: '#b0b0b4', 'font-weight': 500, 'text-anchor': 'middle' },
            place: { 'font-size': 33, fill: '#b0b0b3', 'font-style': 'italic', 'text-anchor': 'middle' },
            peak: { 'font-size': 33, fill: '#86868c', 'font-weight': 500, 'text-anchor': 'middle' },
            height: { 'font-size': 27, fill: '#86868c', 'font-weight': 500, 'text-anchor': 'middle' },
            road: { 'font-size': 36, fill: '#a4a4a7' },
            lane: { 'font-size': 33, fill: '#a4a4a7' },
            contour: { 'font-size': 30, fill: '#8e8e94', 'font-weight': 500 }
        };
        const labels = document.getElementById('labels');
        [['Strmca', 450, 42, 'peak'], ['384 m', 450, 77, 'height'], ['PODUTIK', 769, 213, 'area'], ['Veliki vrh', 100, 704, 'village'], ['Oštarija Prigo', 776, 845, 'place'],
            ['Grič', 646, 950, 'village'], ['dprtih', 45, 957, 'place'], ['lurčk', 36, 1001, 'place'], ['Park Gustava Tönniesa', 1263, 812, 'place'], ['Aparthotel Vila Minka', 1393, 212, 'place'],
            ['KOSEZE', 1444, 303, 'district'], ['ŠIŠKA', 2046, 178, 'area'], ['ZGORNJA', 1944, 363, 'district'], ['ŠIŠKA', 1944, 405, 'district'],
            ['Computer History', 2208, 474, 'place'], ['Museum Slovenia', 2208, 516, 'place'], ['SPODNJA', 2404, 678, 'district'], ['ŠIŠKA', 2404, 720, 'district'],
            ['Debeli hrib', 1871, 674, 'peak'], ['372 m', 1871, 708, 'height'], ['Rožnik Hill', 2132, 887, 'village'], ['BEŽIGRAD', 2928, 477, 'area'],
            ['SAVSKO', 3384, 671, 'district'], ['NASELJE', 3384, 713, 'district'], ['ZUPANČIČEVA', 3111, 768, 'district'], ['JAMA', 3111, 810, 'district'],
            ['Veliki Rakovnik', 1497, 961, 'peak'], ['358 m', 1497, 996, 'height'], ['Tivolski vrh', 2195, 1113, 'peak'], ['387 m', 2194, 1148, 'height'],
            ['Ljubljana ZOO', 1551, 1164, 'place'], ['ROŽNIK', 1692, 1376, 'area'], ['ROŽNA', 1991, 1432, 'district'], ['DOLINA', 1991, 1474, 'district'],
            ['VRTAČA', 2395, 1485, 'district'], ['VIŠKO POLJE', 1523, 1626, 'district'], ['NOVO BRDO', 1218, 1695, 'district'], ['BRDO', 1003, 1518, 'district'],
            ['VRHOVCI', 962, 1712, 'district'], ['BOKALCE', 586, 1316, 'area'], ['Grad Bokalce', 527, 1560, 'place'], ['GLINCE', 1930, 1795, 'district'],
            ['VODMAT', 3490, 1152, 'district'], ['National Gallery', 2576, 1245, 'place'], ['CENTER', 2788, 1355, 'area'], ['GRAJSKI GRIČ', 2892, 1478, 'district'], ['Šance', 2971, 1628, 'village'],
            ['Severna obvoznica', 1410, 82, 'road', -22], ['Litostrojska', 2142, 52, 'road', -62], ['Goriška ulica', 2350, 236, 'road', 54], ['Staničeva ulica', 2740, 430, 'lane', 79],
            ['Linhartova cesta', 3026, 706, 'road', -15], ['Dunajska cesta', 2816, 948, 'road', -75], ['Vilharjeva cesta', 2960, 913, 'road', 0], ['Celovška cesta', 2392, 775, 'road', 56],
            ['Pod hribom', 1802, 512, 'lane', 10], ['Draga', 1486, 444, 'lane', 16], ['Zahodna obvoznica', 676, 1496, 'road', -63], ['Razori', 140, 1312, 'lane', 53],
            ['Tržaška cesta', 2072, 1712, 'road', -24], ['Poljanski nasip', 3012, 1342, 'lane', 25], ['Poljanska cesta', 3373, 1493, 'road', 3], ['Hradeckega cesta', 3382, 1724, 'road', -38],
            ['Pot', 1158, 1195, 'lane', -82], ['400 m', 268, 156, 'contour', 38], ['400 m', 458, 484, 'contour', -34], ['400 m', 15, 797, 'contour', -12],
            ['300 m', 1196, 582, 'contour', -80], ['300 m', 3024, 408, 'contour', 45], ['300 m', 2732, 922, 'contour', 56]
        ].forEach(([text, x, y, kind, angle]) => {
            const attrs = { x, y, stroke: '#f6f6f6', 'stroke-opacity': 0.7, 'stroke-width': 5, ...kinds[kind] };
            if (angle) attrs.transform = `rotate(${angle} ${x} ${y})`;
            draw(labels, 'text', attrs, text);
        });

        // --- Route: x, y, pace band ---
        const track = [[2122, 373, 12.5], [2110, 385, 12.5], [2095, 392, 12], [2060, 372, 11], [2030, 355, 11], [1990, 330, 12], [1970, 318, 11], [1945, 300, 13], [1930, 288, 12.5], [1918, 265, 11],
            [1908, 246, 8.5], [1898, 239, 8], [1885, 242, 8], [1870, 225, 12], [1875, 205, 12.5], [1882, 183, 12], [1835, 167, 13], [1828, 158, 12.5], [1785, 145, 12.5], [1770, 120, 12.5],
            [1760, 95, 12.5], [1745, 98, 12.5], [1735, 115, 12.5], [1700, 134, 11], [1685, 132, 11.5], [1668, 121, 12.5], [1605, 145, 12.5], [1565, 143, 12.5], [1522, 136, 12.5], [1490, 145, 12.5], [1455, 190, 12.5],
            [1448, 240, 12.5], [1462, 262, 12.5], [1392, 375, 12.5], [1425, 386, 12], [1440, 398, 11.5], [1458, 418, 11], [1484, 427, 8], [1495, 430, 6], [1490, 455, 7], [1484, 490, 12],
            [1480, 515, 17], [1478, 535, 28], [1477, 550, 33], [1474, 562, 24], [1471, 580, 14], [1468, 610, 9], [1466, 660, 7], [1464, 700, 7], [1462, 712, 8], [1435, 740, 9],
            [1415, 750, 11], [1400, 765, 16], [1388, 778, 27], [1378, 790, 33], [1366, 800, 21], [1355, 812, 10], [1340, 825, 6], [1320, 845, 8], [1304, 868, 11], [1300, 890, 11.5], [1303, 922, 9],
            [1295, 930, 9], [1265, 952, 9], [1245, 970, 13], [1237, 982, 20], [1230, 1000, 33], [1226, 1015, 22], [1219, 1032, 11], [1200, 1060, 9], [1180, 1085, 8.5], [1166, 1115, 9],
            [1158, 1170, 9], [1154, 1230, 9], [1150, 1260, 9], [1135, 1300, 9], [1115, 1328, 11], [1098, 1340, 17], [1088, 1354, 26], [1100, 1366, 33], [1115, 1380, 20], [1130, 1400, 12],
            [1138, 1430, 9], [1145, 1520, 9], [1147, 1560, 10], [1155, 1568, 10], [1180, 1571, 13], [1195, 1569, 19], [1215, 1567, 28], [1235, 1566, 17], [1265, 1562, 10], [1300, 1561, 9],
            [1335, 1566, 8], [1345, 1573, 8], [1385, 1593, 10], [1410, 1612, 14], [1430, 1625, 20], [1445, 1636, 33], [1458, 1643, 21], [1480, 1652, 13], [1525, 1667, 10], [1600, 1677, 9],
            [1640, 1689, 9], [1710, 1702, 8], [1760, 1704, 7], [1775, 1699, 11], [1810, 1696, 8], [1830, 1695, 10], [1842, 1686, 19], [1858, 1677, 33], [1875, 1666, 18], [1900, 1648, 9],
            [2040, 1572, 11], [2070, 1550, 14], [2085, 1543, 20], [2105, 1534, 33], [2122, 1528, 20], [2145, 1517, 13], [2165, 1508, 8], [2310, 1417, 9], [2330, 1408, 16], [2350, 1397, 28],
            [2368, 1385, 18], [2385, 1370, 12], [2400, 1357, 9], [2420, 1330, 10], [2440, 1300, 11], [2455, 1265, 12], [2463, 1225, 13], [2480, 1170, 13], [2480, 1140, 12], [2507, 1085, 12],
            [2509, 1020, 11], [2509, 1015, 7], [2509, 985, 7], [2509, 970, 12], [2507, 955, 12], [2460, 895, 11], [2435, 850, 11], [2400, 785, 12], [2370, 730, 12.5], [2340, 665, 9],
            [2332, 652, 14], [2318, 660, 15], [2300, 660, 12], [2285, 643, 9], [2240, 610, 13], [2185, 558, 13], [2178, 542, 12], [2206, 520, 11], [2195, 492, 11.5], [2165, 460, 11],
            [2138, 425, 11], [2135, 410, 9], [2145, 400, 8], [2138, 397, 8]];
        const spurs = [[[1338, 1570, 7], [1338, 1587, 7]], [[1154, 1239, 8.5], [1167, 1240, 8.5]]];

        function bandColor(v) {
            const i = Math.min(Math.floor(v), bands.length - 2);
            const rgb = [1, 3, 5].map((p) => {
                const a = parseInt(bands[i][2].slice(p, p + 2), 16);
                const b = parseInt(bands[i + 1][2].slice(p, p + 2), 16);
                return Math.round(a + (b - a) * (v - i));
            });
            return `rgb(${rgb.join(',')})`;
        }

        const route = document.getElementById('route');
        [track, ...spurs].forEach((line) => {
            for (let i = 1; i < line.length; i++) {
                const [x1, y1, v1] = line[i - 1];
                const [x2, y2, v2] = line[i];
                const steps = Math.max(1, Math.round(Math.hypot(x2 - x1, y2 - y1) / 6));
                for (let s = 0; s < steps; s++) {
                    const a = s / steps;
                    const b = (s + 1) / steps;
                    draw(route, 'line', {
                        x1: x1 + (x2 - x1) * a, y1: y1 + (y2 - y1) * a,
                        x2: x1 + (x2 - x1) * b, y2: y1 + (y2 - y1) * b,
                        stroke: bandColor(v1 + (v2 - v1) * (a + b) / 2)
                    });
                }
            }
        });
    </script>
</body>
</html>
